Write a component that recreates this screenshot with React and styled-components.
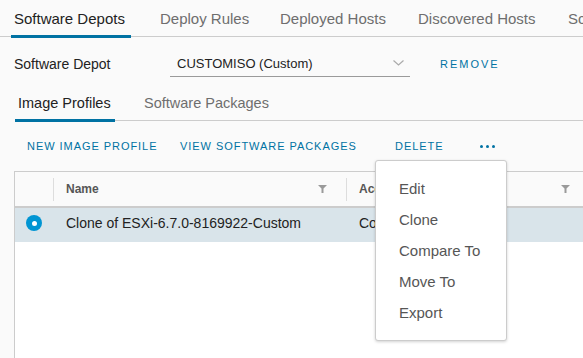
import React from "react";
import styled, { createGlobalStyle } from "styled-components";

const GlobalStyle = createGlobalStyle`
  body {
    margin: 0;
    background: #fafafa;
    font-family: "Liberation Sans", Arial, sans-serif;
    overflow: hidden;
  }
`;

const Page = styled.div`
  position: relative;
  width: 583px;
  height: 358px;
  overflow: hidden;
`;

const TabBar = styled.div`
  display: flex;
  height: 36px;
  border-bottom: 1px solid #ccc;
  padding-left: 11px;
  gap: 26px;
  white-space: nowrap;
`;

const Tab = styled.div`
  box-sizing: border-box;
  flex: none;
  width: ${({ w }) => (w ? `${w}px` : "auto")};
  height: 38px;
  padding: 1px 3px 0;
  display: flex;
  align-items: center;
  font-size: 15px;
  color: ${({ active }) => (active ? "#222" : "#6e6e6e")};
  border-bottom: 3px solid ${({ active }) => (active ? "#0072a3" : "transparent")};
`;

const FormRow = styled.div`
  display: flex;
  align-items: center;
  height: 52px;
  padding: 1px 0 0 14px;
  box-sizing: border-box;
`;

const Label = styled.div`
  width: 156px;
  font-size: 14px;
  color: #222;
`;

const Select = styled.div`
  box-sizing: border-box;
  width: 240px;
  height: 27px;
  display: flex;
  align-items: center;
  justify-content: space-between;
  padding: 0 6px 0 7px;
  border-bottom: 1px solid #9a9a9a;
  font-size: 13px;
  color: #222;
`;

const LinkButton = styled.div`
  flex: none;
  font-size: 11px;
  letter-spacing: ${({ wide }) => (wide ? "2px" : "0.95px")};
  color: #0072a3;
  text-transform: uppercase;
  white-space: nowrap;
  width: ${({ w }) => (w ? `${w}px` : "auto")};
  margin-left: ${({ ml }) => (ml ? `${ml}px` : "0")};
`;

const SubTabBar = styled.div`
  display: flex;
  height: 31px;
  margin-left: 15px;
  border-bottom: 1px solid #ccc;
  gap: 26px;
  white-space: nowrap;
`;

const SubTab = styled(Tab)`
  height: 33px;
  font-size: 14.5px;
  padding: 0 3px 3px;
`;

const Actions = styled.div`
  display: flex;
  align-items: center;
  height: 50px;
  padding-left: 27px;
`;

const Dots = styled.div`
  display: flex;
  gap: 3px;
  padding-top: 1px;
  span {
    width: 3px;
    height: 3px;
    border-radius: 50%;
    background: #0072a3;
  }
`;

const Table = styled.div`
  margin-left: 14px;
  width: 640px;
  height: 200px;
  border-top: 1px solid #ccc;
  border-left: 1px solid #ccc;
  background: #fff;
`;

const HeaderRow = styled.div`
  display: flex;
  align-items: center;
  height: 34px;
  background: #fafafa;
  border-bottom: 2px solid #ccc;
`;

const Row = styled.div`
  display: flex;
  align-items: center;
  box-sizing: border-box;
  height: 34px;
  padding-bottom: 4px;
  background: #d9e4ea;
`;

const Cell = styled.div`
  box-sizing: border-box;
  flex: none;
  width: ${({ w }) => w}px;
  height: 100%;
  display: flex;
  align-items: center;
  justify-content: ${({ center }) => (center ? "center" : "space-between")};
  padding: ${({ center }) => (center ? "0" : "0 19px 0 13px")};
  font-size: 14px;
  color: #222;
  white-space: nowrap;
  overflow: hidden;
  position: relative;
`;

const HeadCell = styled(Cell)`
  font-size: 12px;
  font-weight: 700;
  color: #565656;
  ${({ sep }) =>
    sep &&
    `&::before {
      content: "";
      position: absolute;
      left: 0;
      top: 6px;
      bottom: 5px;
      width: 1px;
      background: #ddd;
    }`}
`;

const Radio = styled.div`
  width: 16px;
  height: 16px;
  border-radius: 50%;
  background: #0095d3;
  display: flex;
  align-items: center;
  justify-content: center;
  &::after {
    content: "";
    width: 5px;
    height: 5px;
    border-radius: 50%;
    background: #fff;
  }
`;

const Menu = styled.div`
  position: absolute;
  left: 375px;
  top: 160px;
  box-sizing: border-box;
  width: 132px;
  height: 181px;
  padding-top: 12px;
  background: #fff;
  border: 1px solid #ccc;
  border-radius: 3px;
  box-shadow: 0 1px 3px rgba(0, 0, 0, 0.18);
`;

const MenuItem = styled.div`
  height: 31px;
  display: flex;
  align-items: center;
  padding-left: 23px;
  font-size: 15px;
  color: #565656;
`;

const Chevron = () => (
  <svg width="11" height="6" viewBox="0 0 11 6">
    <polyline points="0.5,0.5 5.5,5 10.5,0.5" fill="none" stroke="#aaa" strokeWidth="1.2" />
  </svg>
);

const Filter = () => (
  <svg width="9" height="8" viewBox="0 0 9 8">
    <path d="M0 0 H9 L5.5 3.5 V8 H3.5 V3.5 Z" fill="#9a9a9a" />
  </svg>
);

export default function App() {
  return (
    <Page>
      <GlobalStyle />
      <TabBar>
        <Tab active w={120}>Software Depots</Tab>
        <Tab w={94}>Deploy Rules</Tab>
        <Tab w={112}>Deployed Hosts</Tab>
        <Tab w={124}>Discovered Hosts</Tab>
        <Tab>Script Bundles</Tab>
      </TabBar>

      <FormRow>
        <Label>Software Depot</Label>
        <Select>
          CUSTOMISO (Custom)
          <Chevron />
        </Select>
        <LinkButton ml={30} wide>
          Remove
        </LinkButton>
      </FormRow>

      <SubTabBar>
        <SubTab active w={100}>Image Profiles</SubTab>
        <SubTab>Software Packages</SubTab>
      </SubTabBar>

      <Actions>
        <LinkButton w={153}>New Image Profile</LinkButton>
        <LinkButton w={215}>View Software Packages</LinkButton>
        <LinkButton w={85}>Delete</LinkButton>
        <Dots>
          <span />
          <span />
          <span />
        </Dots>
      </Actions>

      <Table>
        <HeaderRow>
          <HeadCell w={38} center />
          <HeadCell w={293} sep>
            Name
            <Filter />
          </HeadCell>
          <HeadCell w={243} sep>
            Acceptance Level
            <Filter />
          </HeadCell>
          <HeadCell w={60} sep />
        </HeaderRow>
        <Row>
          <Cell w={38} center>
            <Radio />
          </Cell>
          <Cell w={293}>Clone of ESXi-6.7.0-8169922-Custom</Cell>
          <Cell w={243}>CommunitySupported</Cell>
        </Row>
      </Table>

      <Menu>
        <MenuItem>Edit</MenuItem>
        <MenuItem>Clone</MenuItem>
        <MenuItem>Compare To</MenuItem>
        <MenuItem>Move To</MenuItem>
        <MenuItem>Export</MenuItem>
      </Menu>
    </Page>
  );
}
